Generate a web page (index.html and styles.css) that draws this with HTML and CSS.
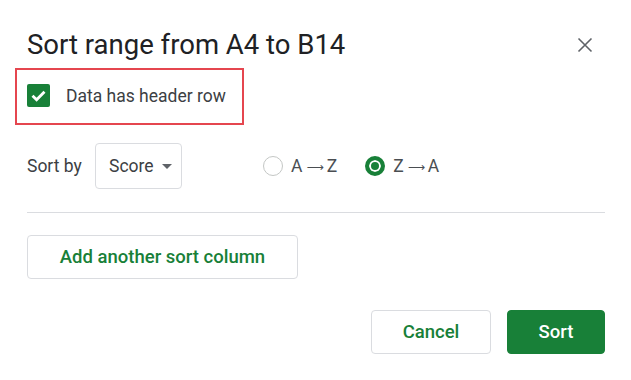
FILE: index.html
```html
<html>
<head>
<meta name="viewport" content="width=device-width, initial-scale=1.0">
<link rel="stylesheet" href="styles.css">
</head>
<body>
  <div class="dialog">
    <div class="dialog_head">
      <h1 class="dialog_title">Sort range from A4 to B14</h1>
      <span class="close_btn">
        <svg width="16" height="16" viewBox="0 0 16 16"><path d="M1.5 1.5L14.5 14.5M14.5 1.5L1.5 14.5" stroke="#5f6368" stroke-width="1.6" fill="none"/></svg>
      </span>
    </div>

    <label class="header_check">
      <span class="check_box">
        <svg width="23" height="23" viewBox="0 0 23 23"><path d="M5.5 11.8L9.6 15.8L17.5 7.8" stroke="#fff" stroke-width="2.8" fill="none"/></svg>
      </span>
      <span class="check_label">Data has header row</span>
    </label>

    <div class="sort_row">
      <span class="sort_label">Sort by</span>
      <div class="select_box">
        <span>Score</span>
        <span class="select_arrow"></span>
      </div>
      <div class="radio_group">
        <label class="radio_item"><span class="radio"></span>A<span class="arrow">&#10230;</span>Z</label>
        <label class="radio_item"><span class="radio checked"></span>Z<span class="arrow">&#10230;</span>A</label>
      </div>
    </div>

    <div class="divider"></div>

    <button class="btn btn_outline add_btn">Add another sort column</button>

    <div class="dialog_foot">
      <button class="btn btn_outline cancel_btn">Cancel</button>
      <button class="btn btn_primary sort_btn">Sort</button>
    </div>
  </div>
</body>
</html>
```

FILE: styles.css
```css
body {
    margin: 0;
    background: #fff;
    font-family: Roboto, "Liberation Sans", Arial, sans-serif;
    color: #3c4043;
}

.dialog {
    width: 631px;
    height: 380px;
    box-sizing: border-box;
    padding: 28px 26px 0 27px;
}

.dialog_head {
    display: flex;
    justify-content: space-between;
    align-items: center;
    height: 34px;
}

.dialog_title {
    margin: 0;
    font-size: 27.5px;
    font-weight: 400;
    line-height: 34px;
    color: #202124;
}

.close_btn {
    display: flex;
    margin-right: 12px;
}

.header_check {
    display: inline-flex;
    align-items: center;
    margin: 6px 0 0 -12px;
    padding: 14px 16px 16px 10px;
    border: 2px solid #e5464f;
}

.check_box {
    display: flex;
    width: 23px;
    height: 23px;
    border-radius: 2px;
    background: #188038;
}

.check_label {
    margin-left: 16px;
    font-size: 17.5px;
    color: #3c4043;
}

.sort_row {
    display: flex;
    align-items: center;
    margin-top: 18px;
}

.sort_label {
    font-size: 17.5px;
    width: 68px;
}

.select_box {
    display: flex;
    align-items: center;
    box-sizing: border-box;
    width: 87px;
    height: 46px;
    padding: 0 0 0 13px;
    border: 1px solid #dadce0;
    border-radius: 4px;
    font-size: 17.5px;
    color: #3c4043;
}

.select_arrow {
    margin-left: 8px;
    width: 0;
    height: 0;
    border-left: 5px solid transparent;
    border-right: 5px solid transparent;
    border-top: 5px solid #5f6368;
}

.radio_group {
    display: flex;
    margin-left: 81px;
}

.radio_item {
    display: flex;
    align-items: center;
    font-size: 17.5px;
    color: #4a4e52;
    margin-right: 28px;
}

.arrow {
    font-family: "DejaVu Sans", sans-serif;
    font-size: 12px;
    margin: 2px 3px 0 4px;
}

.radio {
    box-sizing: border-box;
    width: 20px;
    height: 20px;
    margin-right: 8px;
    border: 1px solid #c4c7c5;
    border-radius: 50%;
}

.radio.checked {
    border: 4px solid #188038;
    background: #188038;
    box-shadow: inset 0 0 0 2px #fff;
}

.divider {
    height: 1px;
    background: #dadce0;
    margin-top: 23px;
}

.btn {
    box-sizing: border-box;
    height: 44px;
    border-radius: 4px;
    font-family: Roboto, "Liberation Sans", Arial, sans-serif;
    font-size: 18.5px;
    font-weight: 500;
    cursor: pointer;
}

.btn_outline {
    background: #fff;
    border: 1px solid #dadce0;
    color: #188038;
}

.btn_primary {
    background: #188038;
    border: 1px solid #188038;
    color: #fff;
}

.add_btn {
    display: block;
    width: 271px;
    margin-top: 22px;
}

.dialog_foot {
    display: flex;
    justify-content: flex-end;
    gap: 16px;
    margin-top: 31px;
}

.cancel_btn {
    width: 120px;
}

.sort_btn {
    width: 98px;
}
```
